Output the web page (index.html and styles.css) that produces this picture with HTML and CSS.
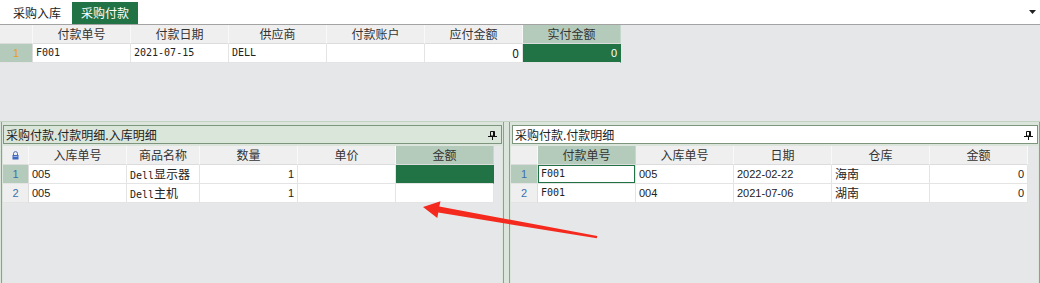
FILE: index.html
```html
<!DOCTYPE html>
<html lang="zh-CN">
<head>
<meta charset="utf-8">
<title>采购付款</title>
<link rel="stylesheet" href="styles.css">
</head>
<body>
<div class="tabbar">
  <div class="tab">采购入库</div>
  <div class="tab active">采购付款</div>
  <div class="spacer"></div>
  <svg class="dd" width="7" height="4" viewBox="0 0 7 4"><polygon points="0,0 7,0 3.5,4" fill="#222"/></svg>
</div>

<div class="top">
  <div class="grid g-top">
    <div class="row head">
      <div class="c rn"></div>
      <div class="c">付款单号</div>
      <div class="c">付款日期</div>
      <div class="c">供应商</div>
      <div class="c">付款账户</div>
      <div class="c">应付金额</div>
      <div class="c sel">实付金额</div>
    </div>
    <div class="row">
      <div class="c rn rn-sel orange">1</div>
      <div class="c mono">F001</div>
      <div class="c mono">2021-07-15</div>
      <div class="c mono">DELL</div>
      <div class="c"></div>
      <div class="c num">0</div>
      <div class="c num fill">0</div>
    </div>
  </div>
</div>

<div class="bottom">
  <div class="pane pane-left">
    <div class="title">
      <span>采购付款.付款明细.入库明细</span>
      <svg class="pin" width="9" height="9" viewBox="0 0 9 9"><path d="M2.5 0.5h4v4.5h-4z" fill="none" stroke="#111"/><rect x="5" y="0.5" width="1.5" height="4.5" fill="#111"/><path d="M0 5.5h9M4.5 5.5v3.5" stroke="#111"/></svg>
    </div>
    <div class="body">
      <div class="grid g-left">
        <div class="row head">
          <div class="c rn"><svg class="lock" width="7" height="9" viewBox="0 0 7 9"><path d="M1.5 4V2.6a2 2 0 0 1 4 0V4" fill="none" stroke="#4a6fb5" stroke-width="1"/><rect x="0.5" y="4" width="6" height="4.5" fill="#3f66c0"/><rect x="1.5" y="5" width="4" height="1" fill="#9db6e8"/></svg></div>
          <div class="c">入库单号</div>
          <div class="c">商品名称</div>
          <div class="c">数量</div>
          <div class="c">单价</div>
          <div class="c sel">金额</div>
        </div>
        <div class="row">
          <div class="c rn rn-sel blue">1</div>
          <div class="c n">005</div>
          <div class="c"><span class="mono">Dell</span>显示器</div>
          <div class="c num n">1</div>
          <div class="c"></div>
          <div class="c fill"></div>
        </div>
        <div class="row">
          <div class="c rn blue">2</div>
          <div class="c n">005</div>
          <div class="c"><span class="mono">Dell</span>主机</div>
          <div class="c num n">1</div>
          <div class="c"></div>
          <div class="c"></div>
        </div>
      </div>
    </div>
  </div>

  <div class="pane pane-right">
    <div class="title title-white">
      <span>采购付款.付款明细</span>
      <svg class="pin" width="9" height="9" viewBox="0 0 9 9"><path d="M2.5 0.5h4v4.5h-4z" fill="none" stroke="#111"/><rect x="5" y="0.5" width="1.5" height="4.5" fill="#111"/><path d="M0 5.5h9M4.5 5.5v3.5" stroke="#111"/></svg>
    </div>
    <div class="body">
      <div class="grid g-right">
        <div class="row head">
          <div class="c rn"></div>
          <div class="c sel">付款单号</div>
          <div class="c">入库单号</div>
          <div class="c">日期</div>
          <div class="c">仓库</div>
          <div class="c">金额</div>
        </div>
        <div class="row">
          <div class="c rn rn-sel blue">1</div>
          <div class="c mono active">F001</div>
          <div class="c n">005</div>
          <div class="c n">2022-02-22</div>
          <div class="c">海南</div>
          <div class="c num n">0</div>
        </div>
        <div class="row">
          <div class="c rn blue">2</div>
          <div class="c mono">F001</div>
          <div class="c n">004</div>
          <div class="c n">2021-07-06</div>
          <div class="c">湖南</div>
          <div class="c num n">0</div>
        </div>
      </div>
    </div>
  </div>
</div>

<svg class="arrow" width="1040" height="283" viewBox="0 0 1040 283">
  <polygon points="423,207 440.5,201.3 439.3,206.4 597.3,236 596.8,238.3 438.3,212.6 437.3,218" fill="#f52a1e"/>
</svg>
</body>
</html>
```

FILE: styles.css
```css
* { box-sizing: border-box; }

html, body {
  margin: 0;
  padding: 0;
}

body {
  width: 1040px;
  height: 283px;
  overflow: hidden;
  position: relative;
  background: #e6e7e9;
  font-family: "Noto Sans CJK SC", "Noto Sans", sans-serif;
  font-size: 12px;
  color: #222;
  display: flex;
  flex-direction: column;
}

/* tab bar */
.tabbar {
  height: 25px;
  flex: none;
  display: flex;
  align-items: flex-end;
  padding: 2px 0 0 4px;
  gap: 2px;
  background: #fff;
  border-bottom: 1px solid #a3a3a3;
}

.tab {
  height: 22px;
  line-height: 22px;
  padding: 0 9px;
  font-size: 12px;
  color: #222;
}

.tab.active {
  background: #217346;
  color: #fff;
}

.spacer { flex: 1; }

.dd {
  align-self: flex-start;
  margin: 8px 4px 0 0;
}

/* top sheet */
.top {
  height: 96px;
  flex: none;
  background: #e6e7e9;
}

/* grids */
.grid {
  display: flex;
  flex-direction: column;
  background: transparent;
}

.row {
  display: grid;
  height: 19px;
}

.g-top .row { grid-template-columns: 33px repeat(6, 98px); }
.g-left .row { grid-template-columns: 26px 98px 73px 98px 98px 98px; }
.g-right .row { grid-template-columns: 27px repeat(5, 98px); }

.c {
  height: 19px;
  line-height: 18px;
  padding: 0 3px;
  background: #fff;
  border-right: 1px solid #e4e4e4;
  border-bottom: 1px solid #e4e4e4;
  white-space: nowrap;
  overflow: hidden;
}

.head .c {
  background: #efefef;
  text-align: center;
  color: #333;
  border-right: 1px solid #f9f9f9;
  border-bottom: 1px solid #dcdcdc;
}

.head .c.sel {
  background: #b4cbbc;
  border-right-color: #c6d7cb;
}

.rn {
  background: #efefef;
  text-align: center;
  padding: 0;
  border-right: 1px solid #dcdcdc;
}

.rn-sel { background: #b4cbbc; }
.row:not(.head) .c.rn { background: #efefef; }
.row:not(.head) .c.rn.rn-sel { background: #b4cbbc; }

.orange { color: #e3a21a; font-family: "Liberation Sans", sans-serif; font-size: 11px; }
.blue { color: #3c6fb0; font-family: "Liberation Sans", sans-serif; font-size: 11px; }

.mono {
  font-family: "DejaVu Sans Mono", "Liberation Mono", monospace;
  font-size: 10px;
}

.n {
  font-family: "Liberation Sans", "Noto Sans", sans-serif;
  font-size: 11px;
}

.num { text-align: right; }

.c.fill {
  background: #217346;
  color: #fff;
  border-right-color: #217346;
  font-family: "Liberation Sans", sans-serif;
  font-size: 11px;
}

.c.active {
  box-shadow: inset 0 0 0 1px #217346;
}

.lock {
  margin-top: 5px;
}

/* bottom panes */
.bottom {
  flex: 1;
  display: flex;
  background: #dbe5db;
  border-top: 1px solid #c3d1c3;
}

.pane {
  display: flex;
  flex-direction: column;
  padding: 3px 1px 0 1px;
  border-left: 1px solid #8ba28b;
  border-right: 1px solid #8ba28b;
}

.pane-left {
  width: 503px;
  margin-left: 1px;
  margin-right: 5px;
}

.pane-right {
  width: 531px;
}

.title {
  height: 19px;
  flex: none;
  display: flex;
  align-items: center;
  justify-content: space-between;
  padding: 0 4px 0 2px;
  border: 1px solid #7d957d;
  background: #dbe6db;
  font-size: 12px;
  color: #222;
}

.title-white {
  background: #fff;
  margin-left: 1px;
}

.pin { flex: none; margin-top: 1px; }

.body {
  flex: 1;
  margin-top: 2px;
  background: #e6e7e9;
}

.arrow {
  position: absolute;
  left: 0;
  top: 0;
  pointer-events: none;
}
```
